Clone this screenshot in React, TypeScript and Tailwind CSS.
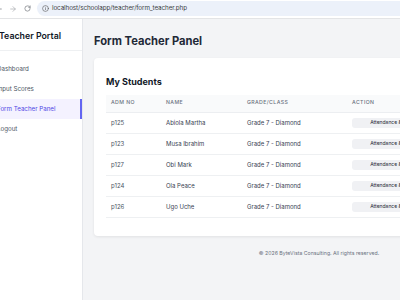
import { ArrowLeft, ArrowRight, RotateCw, Info } from 'lucide-react';

const students = [
  { adm: 'p125', name: 'Abiola Martha', grade: 'Grade 7 - Diamond' },
  { adm: 'p123', name: 'Musa Ibrahim', grade: 'Grade 7 - Diamond' },
  { adm: 'p127', name: 'Obi Mark', grade: 'Grade 7 - Diamond' },
  { adm: 'p124', name: 'Ola Peace', grade: 'Grade 7 - Diamond' },
  { adm: 'p126', name: 'Ugo Uche', grade: 'Grade 7 - Diamond' },
];

const navItems = ['Dashboard', 'Input Scores', 'Form Teacher Panel', 'Logout'];

export default function App() {
  return (
    <div className="w-[400px] h-[300px] overflow-hidden flex flex-col bg-[#f3f4f6] font-['Inter',sans-serif]">
      {/* Browser bar */}
      <div className="h-[19px] shrink-0 bg-white border-b border-[#e3e4e6] flex items-start pt-[1px]">
        <div className="flex items-center h-[15px] text-[#6b6f75]">
          <ArrowLeft className="w-[8px] h-[8px] -ml-[5px]" strokeWidth={2} />
          <ArrowRight className="w-[8px] h-[8px] ml-[6px] text-[#a3a6ab]" strokeWidth={2} />
          <RotateCw className="w-[7px] h-[7px] ml-[7px]" strokeWidth={2.2} />
        </div>
        <div className="ml-[6px] flex-1 h-[15px] rounded-l-full bg-[#ecf1fa] flex items-center pl-[5px]">
          <Info className="w-[7px] h-[7px] text-[#555]" strokeWidth={2} />
          <span className="ml-[3px] text-[6.3px] text-[#3c3f44] tracking-[-0.1px]">
            localhost/schoolapp/teacher/form_teacher.php
          </span>
        </div>
      </div>

      <div className="flex flex-1 min-h-0">
        {/* Sidebar */}
        <aside className="w-[83px] shrink-0 bg-white border-r border-[#e5e7eb] flex flex-col">
          <div className="h-[32px] border-b border-[#eef0f2] flex items-center pt-[3px]">
            <span className="text-[8.8px] font-semibold text-[#111827] -ml-[1px] whitespace-nowrap">Teacher Portal</span>
          </div>
          <nav className="mt-[8px] flex flex-col">
            {navItems.map((item) => {
              const active = item === 'Form Teacher Panel';
              return (
                <div
                  key={item}
                  className={`h-[20px] flex items-center text-[6.2px] whitespace-nowrap ${
                    active
                      ? 'bg-[#f4f2ff] text-[#4f46e5] border-r-2 border-[#6366f1]'
                      : 'text-[#4b5563]'
                  }`}
                >
                  <span className="-ml-[3px]">{item}</span>
                </div>
              );
            })}
          </nav>
        </aside>

        {/* Main */}
        <main className="flex-1 min-w-0 flex flex-col pl-[11px] pt-[14px]">
          <h1 className="text-[11.2px] font-bold text-[#1f2937] leading-[16px] whitespace-nowrap">Form Teacher Panel</h1>
          <div className="mt-[9px] w-[330px] h-[178px] shrink-0 bg-white rounded-[4px] shadow-[0_1px_3px_rgba(0,0,0,0.08)] pl-[12px] pt-[18px]">
            <h2 className="text-[9px] font-bold text-[#111827] leading-[12px]">My Students</h2>
            <table className="mt-[7px] table-fixed border-collapse w-[320px]">
              <colgroup>
                <col className="w-[55px]" />
                <col className="w-[81px]" />
                <col className="w-[105px]" />
                <col className="w-[79px]" />
              </colgroup>
              <thead>
                <tr className="bg-[#f9fafb] h-[17px] border-b border-[#eceef1]">
                  {['ADM NO', 'NAME', 'GRADE/CLASS', 'ACTION'].map((h) => (
                    <th key={h} className="text-left pl-[5px] text-[5.2px] font-medium tracking-[0.4px] text-[#6b7280]">
                      {h}
                    </th>
                  ))}
                </tr>
              </thead>
              <tbody>
                {students.map((s) => (
                  <tr key={s.adm} className="h-[21px] border-b border-[#eef0f2] text-[6px] text-[#374151]">
                    <td className="pl-[5px] text-[#4b5563]">{s.adm}</td>
                    <td className="pl-[5px]">{s.name}</td>
                    <td className="pl-[5px]">{s.grade}</td>
                    <td className="pl-[5px]">
                      <div className="w-[90px] h-[10px] rounded-[3px] bg-[#f0f1f4] flex items-center justify-center text-[5px] text-[#1f2937] whitespace-nowrap">
                        Attendance &amp; Remarks
                      </div>
                    </td>
                  </tr>
                ))}
              </tbody>
            </table>
          </div>
          <footer className="mt-[14px] w-[330px] text-center text-[5.2px] text-[#6b7280] pl-[120px]">
            © 2026 ByteVista Consulting. All rights reserved.
          </footer>
        </main>
      </div>
    </div>
  );
}
